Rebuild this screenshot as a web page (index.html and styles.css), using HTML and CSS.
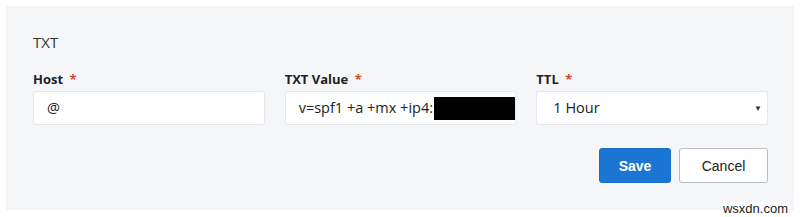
FILE: index.html
```html
<html lang="en">

<head>
    <meta charset="utf-8" />
    <title>DNS record</title>
    <link rel="stylesheet" href="styles.css">
</head>

<body>
    <div class="panel">
        <div class="record-type">TXT</div>
        <div class="fields">
            <div class="field">
                <label class="field-label">Host <span class="required">*</span></label>
                <div class="field-input">@</div>
            </div>
            <div class="field">
                <label class="field-label">TXT Value <span class="required">*</span></label>
                <div class="field-input">v=spf1 +a +mx +ip4:<span class="redacted"></span></div>
            </div>
            <div class="field">
                <label class="field-label">TTL <span class="required">*</span></label>
                <div class="field-input field-select">1 Hour <span class="caret">▼</span></div>
            </div>
        </div>
        <div class="actions">
            <button class="btn btn-primary">Save</button>
            <button class="btn btn-default">Cancel</button>
        </div>
    </div>
    <div class="watermark">wsxdn.com</div>
</body>

</html>
```

FILE: styles.css
```css
body {
    margin: 0;
    background: #fff;
    font-family: "Open Sans", "Liberation Sans", sans-serif;
    color: #2b2b2b;
    width: 800px;
    height: 217px;
    overflow: hidden;
    position: relative;
}

.panel {
    margin: 6px 6px 0 6px;
    height: 204px;
    box-sizing: border-box;
    background: #f5f6f8;
    padding: 26px 26px 0 27px;
}

.record-type {
    font-size: 15px;
    line-height: 20px;
    color: #333;
}

.fields {
    display: flex;
    gap: 20px;
    margin-top: 18px;
}

.field {
    flex: 1 1 0;
    min-width: 0;
    display: flex;
    flex-direction: column;
}

.field-label {
    font-size: 13px;
    font-weight: bold;
    line-height: 18px;
    color: #222;
}

.required {
    color: #d9462b;
    margin-left: 3px;
}

.field-input {
    margin-top: 3px;
    height: 34px;
    box-sizing: border-box;
    background: #fff;
    border: 1px solid #e6e7ea;
    border-radius: 3px;
    padding: 0 13px;
    font-size: 14.5px;
    line-height: 32px;
    color: #222;
    display: flex;
    align-items: center;
    white-space: nowrap;
    overflow: hidden;
}

.redacted {
    display: inline-block;
    flex-shrink: 0;
    width: 86px;
    height: 23px;
    background: #000;
    margin-left: 1px;
}

.field-select {
    padding-left: 16px;
    justify-content: space-between;
}

.caret {
    font-size: 8px;
    color: #333;
    margin-right: -8px;
}

.actions {
    display: flex;
    justify-content: flex-end;
    gap: 8px;
    margin-top: 23px;
}

.btn {
    height: 35px;
    border-radius: 3px;
    font-family: "Liberation Sans", Arial, sans-serif;
    font-size: 14px;
    cursor: pointer;
}

.btn-primary {
    width: 72px;
    background: #1a76d2;
    border: 1px solid #1a6fc6;
    color: #fff;
    font-weight: bold;
}

.btn-default {
    width: 89px;
    background: #fff;
    border: 1px solid #b9bcc2;
    color: #222;
}

.watermark {
    position: absolute;
    right: 10px;
    top: 202px;
    padding: 0 2px;
    background: #fff;
    font-family: "Liberation Sans", Arial, sans-serif;
    font-size: 13px;
    line-height: 14px;
    color: #222;
}
```
